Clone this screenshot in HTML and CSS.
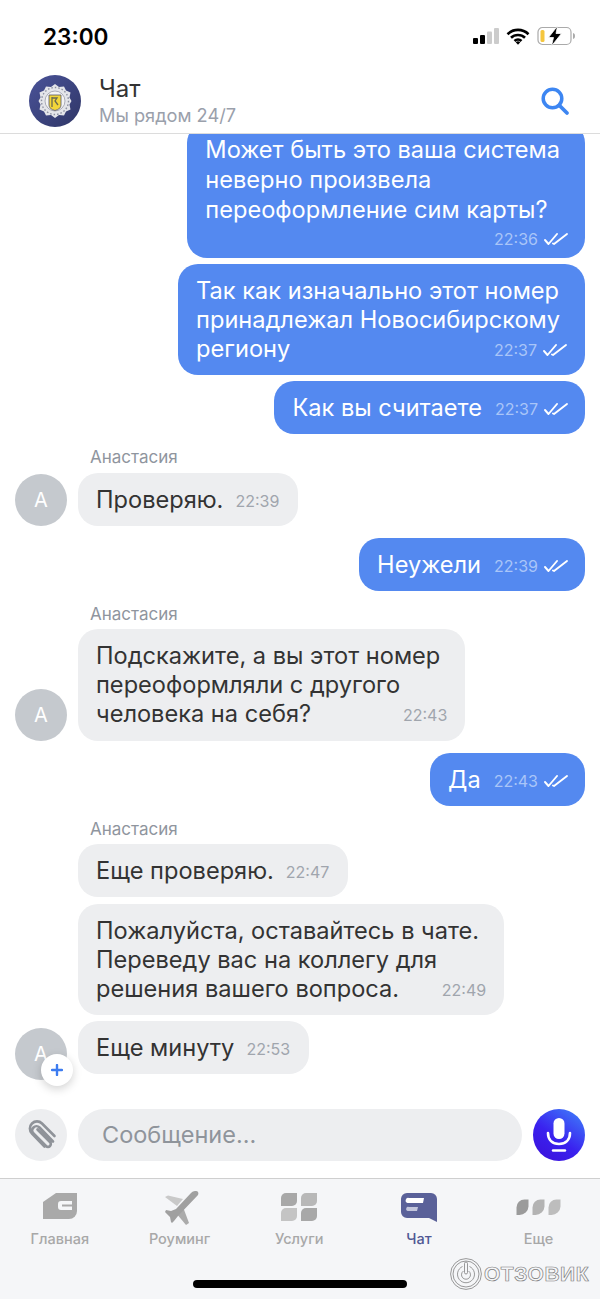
FILE: index.html
```html
<!DOCTYPE html>
<html>
  <head>
    <title>Чат</title>
    <link rel="stylesheet" href="styles.css">
  </head>

  <body>
    <svg class="defs" width="0" height="0">
      <defs>
        <symbol id="checks" viewBox="0 0 24 12">
          <path d="M1 7l3.500 4L13 1M9 10.500l1 .5L23 1" fill="none" stroke="currentColor" stroke-width="1.900" stroke-linecap="round" stroke-linejoin="round"/>
        </symbol>
      </defs>
    </svg>

    <div class="phone">
      <div class="status-bar">
        <span class="clock">23:00</span>
        <div class="status-icons">
          <svg width="26" height="16" viewBox="0 0 26 16">
            <rect x="0" y="10" width="5" height="6" rx="1" fill="#000"/>
            <rect x="7" y="7" width="5" height="9" rx="1" fill="#000"/>
            <rect x="14" y="3.500" width="5" height="12.500" rx="1" fill="#ccc"/>
            <rect x="21" y="0" width="5" height="16" rx="1" fill="#ccc"/>
          </svg>
          <svg width="24" height="17" viewBox="0 0 24 17">
            <path d="M1.500 6.200a15 15 0 0 1 21 0M5 9.800a10 10 0 0 1 14 0M8.500 13a5 5 0 0 1 7 0" fill="none" stroke="#000" stroke-width="2.600"/>
            <path d="M9.700 14.300a3.300 3.300 0 0 1 4.600 0L12 16.800z" fill="#000"/>
          </svg>
          <svg width="39" height="20" viewBox="0 0 39 20">
            <rect x="1" y="1.500" width="33" height="17" rx="4.500" fill="none" stroke="#aaa" stroke-width="1.200"/>
            <rect x="3.500" y="4" width="4" height="12" rx="1.500" fill="#f5c63d"/>
            <path d="M36 7v6c1.500-.4 2-1.500 2-3s-.5-2.600-2-3z" fill="#aaa"/>
            <path d="M20.500 0l-9 11.500h5L14.500 20l10-12.500h-5.500z" fill="#000" stroke="#fff" stroke-width=".8"/>
          </svg>
        </div>
      </div>

      <header class="chat-header">
        <svg class="logo" width="52" height="52" viewBox="0 0 52 52">
          <defs>
            <linearGradient id="logoBg" x1="0" y1="0" x2="1" y2="1">
              <stop offset="0" stop-color="#4a5399"/>
              <stop offset="1" stop-color="#2f3666"/>
            </linearGradient>
          </defs>
          <circle cx="26" cy="26" r="26" fill="url(#logoBg)"/>
          <path d="M26 9l4 3 5-.5 2 4 4.500 2-1 5 2 3.500-2 3.500 1 5-4.500 2-2 4-5-.5-4 3-4-3-5 .5-2-4-4.500-2 1-5-2-3.500 2-3.500-1-5 4.500-2 2-4 5 .5z" fill="#e4e5ea"/>
          <circle cx="26" cy="26" r="13.500" fill="none" stroke="#8b8f9f" stroke-width="1.400" stroke-dasharray="1.500 2"/>
          <circle cx="26" cy="26" r="10" fill="#f4f4f4" stroke="#9a9caa" stroke-width=".8"/>
          <path d="M20 20h12v10q0 4-6 5.500q-6-1.500-6-5.500z" fill="#f2d63a" stroke="#55566a" stroke-width=".8"/>
          <path d="M23 22v10M23 23h5l-2 3 3 4" fill="none" stroke="#6a6a50" stroke-width="1.300"/>
        </svg>
        <div class="chat-title">
          <div class="chat-name">Чат</div>
          <div class="chat-sub">Мы рядом 24/7</div>
        </div>
        <svg class="search" width="30" height="30" viewBox="0 0 30 30">
          <circle cx="12.500" cy="12.500" r="9.300" fill="none" stroke="#3d86f2" stroke-width="3.500"/>
          <path d="M19.500 19.500l7.500 7.500" fill="none" stroke="#3d86f2" stroke-width="3.800" stroke-linecap="round"/>
        </svg>
      </header>

      <main class="messages">
        <div class="bubble out stacked">
          <div class="text">Может быть это ваша система<br>неверно произвела<br>переоформление сим карты?</div>
          <div class="meta">22:36 <svg class="tick"><use href="#checks"/></svg></div>
        </div>
        <div class="bubble out overlay">
          <div class="text">Так как изначально этот номер<br>принадлежал Новосибирскому<br>региону</div>
          <div class="meta">22:37 <svg class="tick"><use href="#checks"/></svg></div>
        </div>
        <div class="bubble out">
          <div class="text">Как вы считаете</div>
          <div class="meta">22:37 <svg class="tick"><use href="#checks"/></svg></div>
        </div>

        <div class="sender sender-first">Анастасия</div>
        <div class="incoming">
          <div class="avatar">А</div>
          <div class="incoming-list">
            <div class="bubble in">
              <div class="text">Проверяю.</div>
              <div class="meta">22:39</div>
            </div>
          </div>
        </div>

        <div class="bubble out group">
          <div class="text">Неужели</div>
          <div class="meta">22:39 <svg class="tick"><use href="#checks"/></svg></div>
        </div>

        <div class="sender">Анастасия</div>
        <div class="incoming">
          <div class="avatar">А</div>
          <div class="incoming-list">
            <div class="bubble in overlay tall">
              <div class="text">Подскажите, а вы этот номер<br>переоформляли с другого<br>человека на себя?</div>
              <div class="meta">22:43</div>
            </div>
          </div>
        </div>

        <div class="bubble out group">
          <div class="text">Да</div>
          <div class="meta">22:43 <svg class="tick"><use href="#checks"/></svg></div>
        </div>

        <div class="sender">Анастасия</div>
        <div class="incoming">
          <div class="avatar avatar-low">
            А
            <span class="add-badge">
              <svg width="12" height="12" viewBox="0 0 12 12"><path d="M6 1v10M1 6h10" stroke="#3d7cf0" stroke-width="2.400" stroke-linecap="round"/></svg>
            </span>
          </div>
          <div class="incoming-list">
            <div class="bubble in">
              <div class="text">Еще проверяю.</div>
              <div class="meta">22:47</div>
            </div>
            <div class="bubble in overlay after-first">
              <div class="text">Пожалуйста, оставайтесь в чате.<br>Переведу вас на коллегу для<br>решения вашего вопроса.</div>
              <div class="meta">22:49</div>
            </div>
            <div class="bubble in">
              <div class="text">Еще минуту</div>
              <div class="meta">22:53</div>
            </div>
          </div>
        </div>
      </main>

      <div class="composer">
        <div class="attach">
          <svg width="32" height="30" viewBox="0 0 30 30">
            <path d="M26 22.500L12.500 8.500a4.200 4.200 0 0 0-6 6L19 27a2.800 2.800 0 0 0 4-4L10.500 10.500M27.500 17L15 4.500a7 7 0 0 0-10 0a7 7 0 0 0 0 10L17.500 27.500" fill="none" stroke="#8f9399" stroke-width="2.600" stroke-linecap="round" transform="translate(1 -1)"/>
          </svg>
        </div>
        <div class="composer-input">Сообщение...</div>
        <div class="mic">
          <svg width="26" height="36" viewBox="0 0 26 36">
            <rect x="7.500" y="1" width="11" height="21" rx="5.500" fill="#fff"/>
            <path d="M2 16c0 7 4.500 11 11 11s11-4 11-11" fill="none" stroke="#fff" stroke-width="2.600" stroke-linecap="round"/>
            <path d="M7 33.500h12" stroke="#fff" stroke-width="2.400" stroke-linecap="round"/>
          </svg>
        </div>
      </div>

      <nav class="tabbar">
        <div class="tab">
          <svg width="36" height="28" viewBox="0 0 36 30">
            <path d="M14 1h21v18a8 8 0 0 1-8 8H1V10z" fill="#a9a9a9"/>
            <path d="M30 9H19a3 3 0 0 0-3 3v3a3 3 0 0 0 3 3h11v-3.500H20v-2h10z" fill="#f5f6f8"/>
          </svg>
          <span>Главная</span>
        </div>
        <div class="tab">
          <svg class="plane" width="36" height="30" viewBox="7 7 36 30">
            <path d="M10 12l3-1.500L28 14l-6 7z" fill="#c9c9c9"/>
            <path d="M28 22l6 16-3 2-10-12z" fill="#ababab"/>
            <path d="M41 6c2 0 3 2 2 4L23 31l-4 5-2 2-1-1-1-5-5-5 1-2 5 1 5-2L36 8c2-2 4-2 5-2z" fill="#a0a0a0"/>
          </svg>
          <span>Роуминг</span>
        </div>
        <div class="tab">
          <svg width="36" height="30" viewBox="0 0 36 30">
            <path d="M5 1h11v8a5 5 0 0 1-5 5H0V6a5 5 0 0 1 5-5z" fill="#a8a8a8"/>
            <path d="M25 1h11v8a5 5 0 0 1-5 5H20V6a5 5 0 0 1 5-5z" fill="#b8b8b8"/>
            <path d="M5 16h11v8a5 5 0 0 1-5 5H0v-8a5 5 0 0 1 5-5z" fill="#c4c4c4"/>
            <path d="M25 16h11v8a5 5 0 0 1-5 5H20v-8a5 5 0 0 1 5-5z" fill="#a8a8a8"/>
          </svg>
          <span>Услуги</span>
        </div>
        <div class="tab active">
          <svg width="36" height="30" viewBox="0 0 36 30">
            <path d="M6 1h24a6 6 0 0 1 6 6v23l-8-4H6a6 6 0 0 1-6-6V7a6 6 0 0 1 6-6z" fill="#5a6199"/>
            <path d="M8 6h15l-1 5H6.500a2 2 0 0 1 1.500-5z" fill="#fff"/>
            <path d="M8 15h9l-1 4H6.500a2 2 0 0 1 1.500-4z" fill="#c3c6dc"/>
          </svg>
          <span>Чат</span>
        </div>
        <div class="tab">
          <svg width="45" height="30" viewBox="0 -7.500 44 30">
            <path d="M12 0v7a9 9 0 0 1-9 8.500H0V8a8 8 0 0 1 8-8z" fill="#9b9b9b"/>
            <path d="M28 0v7a9 9 0 0 1-9 8.500h-3V8a8 8 0 0 1 8-8z" fill="#b3b3b3"/>
            <path d="M44 0v7a9 9 0 0 1-9 8.500h-3V8a8 8 0 0 1 8-8z" fill="#bdbdbd"/>
          </svg>
          <span>Еще</span>
        </div>
        <div class="home-indicator"></div>
        <div class="watermark">
          <svg width="32" height="32" viewBox="0 0 32 32">
            <g fill="none" stroke="#808080" stroke-width=".8">
              <circle cx="16" cy="16" r="15.400"/>
              <circle cx="16" cy="16" r="13"/>
              <path d="M12.500 8.500a8.500 8.500 0 1 0 7 0"/>
              <path d="M13.500 13a4.500 4.500 0 1 0 5 0"/>
              <rect x="14.500" y="4" width="3" height="12" rx="1.500"/>
            </g>
          </svg>
          <span>ОТЗОВИК</span>
        </div>
      </nav>
    </div>
  </body>
</html>
```

FILE: styles.css
```css
* {
  box-sizing: border-box;
}

body {
  margin: 0;
  background: #fff;
  font-family: Inter, "Liberation Sans", sans-serif;
  color: #333;
}

.defs {
  display: block;
  height: 0;
}

.phone {
  width: 600px;
  height: 1299px;
  display: flex;
  flex-direction: column;
  overflow: hidden;
}

/* top */
.status-bar {
  height: 70px;
  flex: none;
  display: flex;
  justify-content: space-between;
  align-items: center;
  padding: 2px 24px 0 43px;
}

.clock {
  font-size: 22.600px;
  font-weight: 600;
  color: #000;
}

.status-icons {
  display: flex;
  align-items: center;
  gap: 7px;
}

.chat-header {
  height: 64px;
  flex: none;
  display: flex;
  align-items: center;
  padding: 0 30px 2px 29px;
  border-bottom: 1px solid #dcdcdc;
}

.chat-title {
  flex: 1;
  margin-left: 18px;
}

.chat-name {
  font-size: 24px;
  line-height: 28px;
}

.chat-sub {
  font-size: 18.200px;
  line-height: 24px;
  color: #9aa0ab;
}

/* messages */
.messages {
  flex: 1;
  min-height: 0;
  display: flex;
  flex-direction: column;
  justify-content: flex-end;
  overflow: hidden;
  padding: 0 15px 35px;
}

.bubble {
  display: flex;
  flex: none;
  align-items: flex-end;
  gap: 13px;
  padding: 12px 17px 12px 18px;
  border-radius: 20px;
  font-size: 23.600px;
  line-height: 29px;
  width: fit-content;
}

.bubble + .bubble {
  margin-top: 6px;
}

.bubble.out {
  align-self: flex-end;
  background: #5489f0;
  color: #fff;
}

.bubble.in {
  background: #edeef0;
  gap: 12px;
  padding-right: 19px;
}

.bubble.group {
  margin-top: 12px;
}

.bubble.after-first {
  margin-top: 7px;
}

.bubble.stacked {
  display: block;
  padding-right: 25px;
  padding-bottom: 8px;
  line-height: 30px;
}

.bubble.overlay {
  display: grid;
  padding-right: 25px;
}

.bubble.tall {
  padding-bottom: 13px;
}

.bubble.overlay .text,
.bubble.overlay .meta {
  grid-area: 1 / 1;
}

.bubble.overlay .meta {
  justify-self: end;
  align-self: end;
  margin-right: -7px;
}

.meta {
  display: flex;
  align-items: center;
  gap: 6px;
  font-size: 16px;
  line-height: 26px;
  white-space: nowrap;
}

.in .meta {
  color: #a0a5ad;
}

.out .meta {
  color: #a9c5f8;
}

.stacked .meta {
  justify-content: flex-end;
  margin: 3px -8px 0 0;
  line-height: 22px;
}

.tick {
  width: 24px;
  height: 12px;
  color: #fff;
}

.sender {
  margin: 15px 0 6px 75px;
  font-size: 17px;
  line-height: 17px;
  color: #8f959e;
  flex: none;
}

.sender-first {
  margin-bottom: 7px;
}

.incoming {
  display: flex;
  align-items: flex-end;
  gap: 11px;
  flex: none;
}

.incoming-list {
  display: flex;
  flex-direction: column;
}

.avatar {
  position: relative;
  width: 52px;
  height: 52px;
  flex: none;
  border-radius: 50%;
  background: #c5c9ce;
  color: #fff;
  font-size: 20px;
  display: flex;
  align-items: center;
  justify-content: center;
}

.avatar-low {
  margin-bottom: -6px;
}

.add-badge {
  position: absolute;
  left: 26px;
  top: 26px;
  width: 32px;
  height: 32px;
  border-radius: 50%;
  background: #fff;
  box-shadow: 0 3px 10px rgba(0, 0, 0, 0.18);
  display: flex;
  align-items: center;
  justify-content: center;
}

/* composer */
.composer {
  flex: none;
  display: flex;
  align-items: center;
  gap: 11px;
  height: 52px;
  margin-bottom: 17px;
  padding: 0 15px;
}

.attach {
  width: 52px;
  height: 52px;
  flex: none;
  border-radius: 50%;
  background: #edeef0;
  display: flex;
  align-items: center;
  justify-content: center;
}

.composer-input {
  flex: 1;
  height: 52px;
  border-radius: 26px;
  background: #edeef0;
  padding: 0 24px;
  font-size: 23.500px;
  line-height: 52px;
  color: #8f949b;
}

.mic {
  width: 52px;
  height: 52px;
  flex: none;
  border-radius: 50%;
  background: linear-gradient(215deg, #3f86fb 0%, #3a22ef 55%, #3c0fd8 100%);
  display: flex;
  align-items: center;
  justify-content: center;
}

/* tabs */
.tabbar {
  position: relative;
  flex: none;
  height: 121px;
  display: flex;
  align-items: flex-start;
  background: #f5f6f8;
  border-top: 1px solid #cfcfcf;
}

.tab {
  width: 119.700px;
  height: 74px;
  padding-top: 13px;
  display: flex;
  flex-direction: column;
  align-items: center;
  font-size: 14.500px;
  font-weight: 500;
  color: #a8a8a8;
}

.tab svg {
  height: 30px;
  flex: none;
  overflow: visible;
}

.tab span {
  margin-top: 8px;
  line-height: 18px;
}

.tab.active {
  color: #4f5894;
}

.home-indicator {
  position: absolute;
  left: 193px;
  top: 101px;
  width: 214px;
  height: 8px;
  border-radius: 4px;
  background: #000;
}

.watermark {
  position: absolute;
  left: 450px;
  top: 79px;
  display: flex;
  align-items: center;
  gap: 2px;
}

.watermark span {
  font-family: "Liberation Sans", sans-serif;
  font-size: 21px;
  font-weight: 700;
  letter-spacing: 0.500px;
  color: #f5f6f8;
  -webkit-text-stroke: 0.700px #808080;
}
```
